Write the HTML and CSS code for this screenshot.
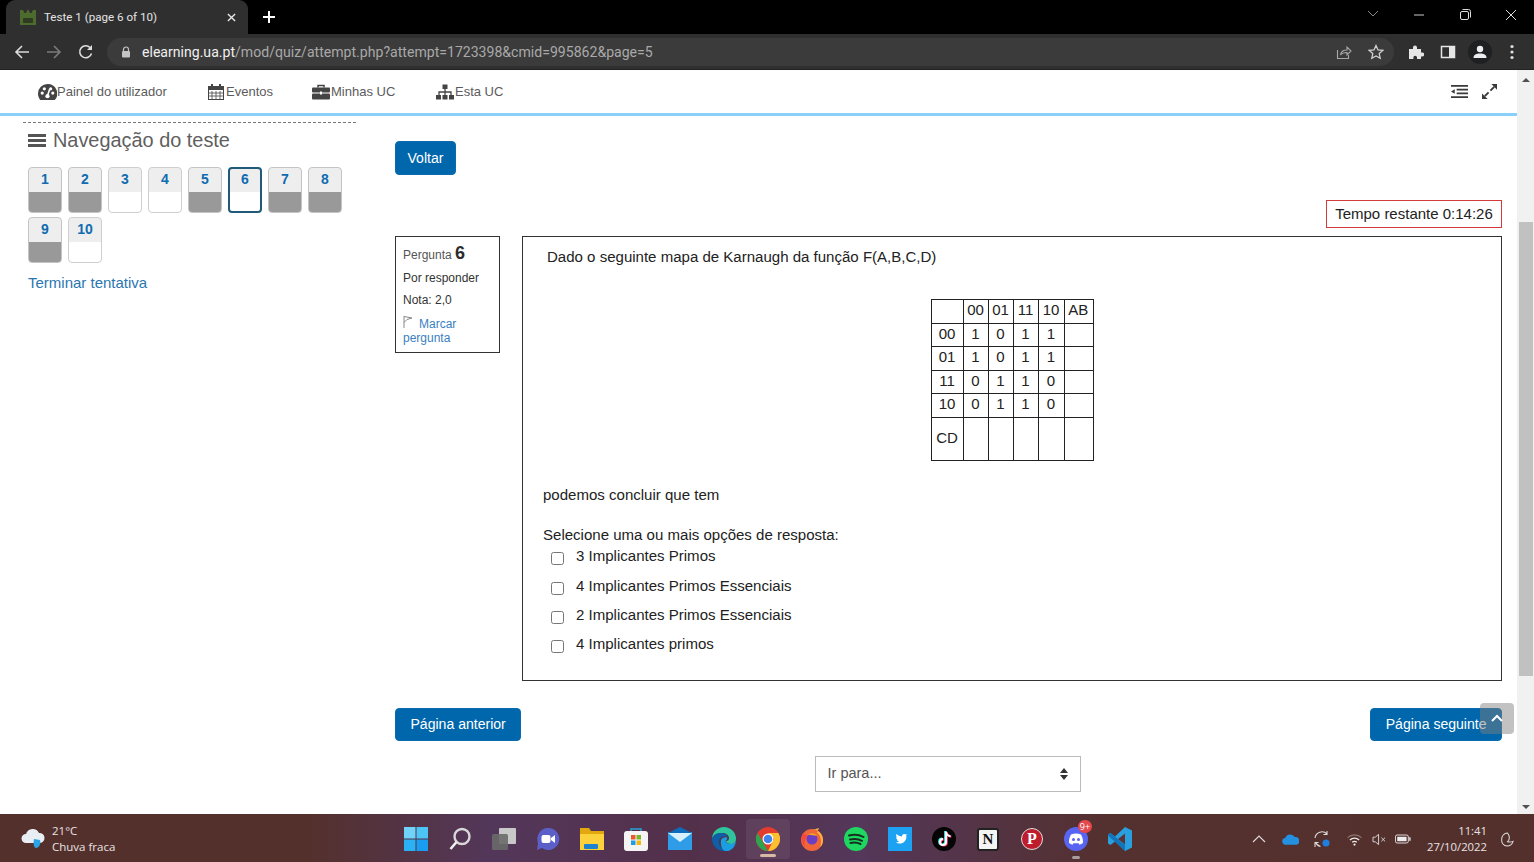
FILE: index.html
```html
<!DOCTYPE html>
<html lang="pt">
<head>
<meta charset="utf-8">
<title>Teste 1 (page 6 of 10)</title>
<link rel="stylesheet" href="styles.css">
</head>
<body>
<div class="tabstrip">
  <div class="tab">
    <svg class="favicon" viewBox="0 0 16 16"><path d="M0 1h3l1.500 3h1.500l2-4 2 4h1.500l1.500-3h3v15H0z" fill="#4d6b2c"/><rect x="3" y="9" width="10" height="5" rx="1" fill="#2f3a22"/></svg>
    <span class="tab-title">Teste 1 (page 6 of 10)</span>
    <svg class="tab-close" viewBox="0 0 10 10"><path d="M1 1l8 8M9 1l-8 8" stroke="#e8e8e8" stroke-width="1.500"/></svg>
  </div>
  <svg class="newtab" viewBox="0 0 12 12"><path d="M6 0v12M0 6h12" stroke="#fff" stroke-width="2"/></svg>
  <div class="winctl">
    <svg class="ctl" viewBox="0 0 46 20"><path d="M18 6l5 5 5-5" fill="none" stroke="#8a8a8a"/></svg>
    <svg class="ctl" viewBox="0 0 46 20"><path d="M18 10h10" stroke="#ccc"/></svg>
    <svg class="ctl" viewBox="0 0 46 20"><rect x="18.500" y="6.500" width="8" height="8" rx="1.500" fill="none" stroke="#ddd"/><path d="M20.500 4.500h6a2 2 0 0 1 2 2v6" fill="none" stroke="#ddd"/></svg>
    <svg class="ctl" viewBox="0 0 46 20"><path d="M18 5l10 10M28 5l-10 10" stroke="#ddd"/></svg>
  </div>
</div>

<div class="toolbar">
  <svg class="tb-ic" viewBox="0 0 16 16"><path d="M15 8H2M8 2L2 8l6 6" fill="none" stroke="#dcdcdc" stroke-width="1.600"/></svg>
  <svg class="tb-ic" viewBox="0 0 16 16"><path d="M1 8h13M8 2l6 6-6 6" fill="none" stroke="#7b7b7b" stroke-width="1.600"/></svg>
  <svg class="tb-ic" viewBox="0 0 16 16"><path d="M13.500 9.500A6 6 0 1 1 12 3.500" fill="none" stroke="#dcdcdc" stroke-width="1.600"/><path d="M14 1v5H9z" fill="#dcdcdc"/></svg>
  <div class="omnibox">
    <svg class="lock" viewBox="0 0 10 12"><path d="M2.500 5V3.500a2.500 2.500 0 0 1 5 0V5" fill="none" stroke="#c4c4c4" stroke-width="1.200"/><rect x="1" y="5" width="8" height="6.500" rx="1" fill="#c4c4c4"/></svg>
    <span class="url"><span class="host">elearning.ua.pt</span>/mod/quiz/attempt.php?attempt=1723398&amp;cmid=995862&amp;page=5</span>
    <svg class="omni-ic" viewBox="0 0 16 16"><path d="M1.500 6v8.500h11V11" fill="none" stroke="#a8a8a8" stroke-width="1.100"/><path d="M4.500 11c.5-3.500 3-5 6.500-5V3l4 4-4 4V8.500c-3 0-5 .5-6.500 2.500z" fill="none" stroke="#a8a8a8" stroke-width="1.100"/></svg>
    <svg class="omni-ic omni-last" viewBox="0 0 16 16"><path d="M8 1.500l2 4.400 4.800.5-3.600 3.200 1 4.700L8 11.900l-4.200 2.400 1-4.700L1.200 6.400 6 5.900z" fill="none" stroke="#d0d0d0" stroke-width="1.300"/></svg>
  </div>
  <svg class="tb-ic" viewBox="0 0 16 16"><path d="M1 5h4V3.500a2 2 0 0 1 4 0V5h4v3.500h1.200a2 2 0 0 1 0 4H13V15H9v-1.500a1.800 1.800 0 0 0-3.600 0V15H1z" fill="#e6e6e6"/></svg>
  <svg class="tb-ic" viewBox="0 0 16 16"><rect x="1.500" y="2.500" width="13" height="11" fill="none" stroke="#e6e6e6" stroke-width="1.500"/><rect x="9" y="2.500" width="5.500" height="11" fill="#e6e6e6"/></svg>
  <div class="avatar"><svg viewBox="0 0 16 16"><circle cx="8" cy="5" r="3.200" fill="#eee"/><path d="M1.500 14c0-3.500 3-4.500 6.500-4.500s6.500 1 6.500 4.500z" fill="#eee"/></svg></div>
  <svg class="tb-ic" viewBox="0 0 16 16"><circle cx="8" cy="2.500" r="1.600" fill="#e0e0e0"/><circle cx="8" cy="8" r="1.600" fill="#e0e0e0"/><circle cx="8" cy="13.500" r="1.600" fill="#e0e0e0"/></svg>
</div>

<div class="viewport">
  <div class="page">
    <nav class="sitenav">
      <a class="navlink nav-a"><svg class="nav-ic" viewBox="0 0 18 15"><path d="M9 0a9 9 0 0 0-9 9c0 2.300.8 4.300 2.100 6h13.800A9 9 0 0 0 9 0z" fill="#444"/><circle cx="4" cy="8.500" r="1.500" fill="#fff"/><circle cx="6" cy="4.500" r="1.500" fill="#fff"/><circle cx="14" cy="8.500" r="1.500" fill="#fff"/><circle cx="12" cy="4.500" r="1.500" fill="#fff"/><circle cx="9" cy="11.500" r="2" fill="#fff"/><path d="M9 11l2-6" stroke="#fff" stroke-width="1.500"/></svg>Painel do utilizador</a>
      <a class="navlink nav-b"><svg class="nav-ic-sq" viewBox="0 0 16 16"><rect x=".5" y="2.500" width="15" height="13" fill="#fff" stroke="#444"/><path d="M0 3h16v3H0z" fill="#444"/><path d="M4 7v8M8 7v8M12 7v8M1 9h14M1 12h14" stroke="#444" stroke-width=".8"/><rect x="3" y="0" width="2" height="4" fill="#444"/><rect x="11" y="0" width="2" height="4" fill="#444"/></svg>Eventos</a>
      <a class="navlink nav-c"><svg class="nav-ic-sq" viewBox="0 0 18 15"><path d="M6 3V1h6v2" fill="none" stroke="#444" stroke-width="1.500"/><rect x="0" y="3" width="18" height="5" rx="1" fill="#444"/><rect x="0" y="9" width="18" height="6" rx="1" fill="#444"/><rect x="8" y="7" width="2" height="3" fill="#fff"/></svg>Minhas UC</a>
      <a class="navlink nav-d"><svg class="nav-ic-sq" viewBox="0 0 18 15"><rect x="6.500" y="0" width="5" height="4.500" fill="#444"/><path d="M9 4v4M3 11V7.500h12V11M9 8v3" fill="none" stroke="#444" stroke-width="1.300"/><rect x="0" y="10.500" width="5" height="4.500" fill="#444"/><rect x="6.500" y="10.500" width="5" height="4.500" fill="#444"/><rect x="13" y="10.500" width="5" height="4.500" fill="#444"/></svg>Esta UC</a>
      <div class="nav-tools">
        <svg class="tool-ic" viewBox="0 0 18 14"><path d="M0 1h18M6 5h12M6 9h12M0 13h18" stroke="#3a3a3a" stroke-width="2"/><path d="M4 4.500v5L0 7z" fill="#3a3a3a"/></svg>
        <svg class="tool-ic" viewBox="0 0 16 16"><path d="M9 7l4-4M3 13l4-4" stroke="#3a3a3a" stroke-width="2"/><path d="M10 0h6v6zM0 10l6 6H0z" fill="#3a3a3a"/></svg>
      </div>
    </nav>

    <div class="content">
      <aside class="side">
        <h2 class="side-title"><svg class="burger" viewBox="0 0 18 14"><path d="M0 2h18M0 7h18M0 12h18" stroke="#555" stroke-width="3"/></svg>Navegação do teste</h2>
        <div class="qgrid">
          <a class="qb filled"><span>1</span></a>
          <a class="qb filled"><span>2</span></a>
          <a class="qb"><span>3</span></a>
          <a class="qb"><span>4</span></a>
          <a class="qb filled"><span>5</span></a>
          <a class="qb current"><span>6</span></a>
          <a class="qb filled"><span>7</span></a>
          <a class="qb filled"><span>8</span></a>
          <a class="qb filled"><span>9</span></a>
          <a class="qb"><span>10</span></a>
        </div>
        <a class="finish">Terminar tentativa</a>
      </aside>

      <main class="quiz">
        <a class="btn btn-back">Voltar</a>
        <div class="timer">Tempo restante 0:14:26</div>
        <div class="question">
          <div class="info">
            <div class="qno">Pergunta <b>6</b></div>
            <div class="state">Por responder</div>
            <div class="grade">Nota: 2,0</div>
            <a class="flag"><svg class="flag-ic" viewBox="0 0 10 12"><path d="M1 0v12M1 .5l8 1.500-5 1.500-3 3" fill="none" stroke="#888"/></svg>Marcar pergunta</a>
          </div>
          <div class="qtext">
            <p class="lead">Dado o seguinte mapa de Karnaugh da função F(A,B,C,D)</p>
            <table class="kmap">
              <tr><td></td><td>00</td><td>01</td><td>11</td><td>10</td><td>AB</td></tr>
              <tr><td>00</td><td>1</td><td>0</td><td>1</td><td>1</td><td></td></tr>
              <tr><td>01</td><td>1</td><td>0</td><td>1</td><td>1</td><td></td></tr>
              <tr><td>11</td><td>0</td><td>1</td><td>1</td><td>0</td><td></td></tr>
              <tr><td>10</td><td>0</td><td>1</td><td>1</td><td>0</td><td></td></tr>
              <tr class="last"><td>CD</td><td></td><td></td><td></td><td></td><td></td></tr>
            </table>
            <p class="conclude">podemos concluir que tem</p>
            <p class="prompt">Selecione uma ou mais opções de resposta:</p>
            <label class="opt"><input type="checkbox" class="cb"><span>3 Implicantes Primos</span></label>
            <label class="opt"><input type="checkbox" class="cb"><span>4 Implicantes Primos Essenciais</span></label>
            <label class="opt"><input type="checkbox" class="cb"><span>2 Implicantes Primos Essenciais</span></label>
            <label class="opt"><input type="checkbox" class="cb"><span>4 Implicantes primos</span></label>
          </div>
        </div>
        <div class="pager">
          <a class="btn btn-page">Página anterior</a>
          <a class="btn btn-page">Página seguinte</a>
        </div>
        <div class="jump"><div class="select"><span>Ir para...</span><svg class="updown" viewBox="0 0 8 12"><path d="M4 0l4 5H0zM4 12L0 7h8z" fill="#333"/></svg></div></div>
      </main>
    </div>
    <div class="totop"><svg viewBox="0 0 12 8"><path d="M1 7l5-5 5 5" fill="none" stroke="#fff" stroke-width="2"/></svg></div>
  </div>
  <div class="scrollbar">
    <div class="arrow-up"></div>
    <div class="thumb"></div>
    <div class="arrow-down"></div>
  </div>
</div>

<footer class="taskbar">
  <div class="weather">
    <svg class="w-ic" viewBox="0 0 26 24"><path d="M6 16a4.500 4.500 0 0 1 0-9 7 7 0 0 1 13-1 5 5 0 0 1 1 10z" fill="#e8eef4"/><path d="M14 12l6 1c1 4-1 8-4 8-2 0-3-4-2-9z" fill="#2aa4e8"/></svg>
    <div class="w-txt"><div class="w-temp">21°C</div><div class="w-desc">Chuva fraca</div></div>
  </div>
  <div class="apps">
    <div class="app"><svg viewBox="0 0 24 24"><rect width="11.500" height="11.500" fill="#6fd4f8"/><rect x="12.500" width="11.500" height="11.500" fill="#4cc4f6"/><rect y="12.500" width="11.500" height="11.500" fill="#2ab0f4"/><rect x="12.500" y="12.500" width="11.500" height="11.500" fill="#1a9cf0"/></svg></div>
    <div class="app"><svg viewBox="0 0 24 24"><circle cx="14" cy="9.500" r="7.500" fill="none" stroke="#d8d8d8" stroke-width="2.400"/><path d="M8.500 15L2.500 22" stroke="#f0f0f0" stroke-width="2.600"/></svg></div>
    <div class="app"><svg viewBox="0 0 24 24"><rect x="7" y="1" width="17" height="16" rx="1" fill="#c8c8c8"/><rect x="0" y="7" width="16" height="16" rx="1.500" fill="#6a6a6a" opacity=".9"/></svg></div>
    <div class="app"><svg viewBox="0 0 24 24"><path d="M12 1a11 11 0 1 1-6 20l-5 2 1-7A11 11 0 0 1 12 1z" fill="#5b5fc7"/><rect x="5.500" y="8" width="9" height="8" rx="2" fill="#fff"/><path d="M15 11l4-3v8l-4-3z" fill="#fff"/></svg></div>
    <div class="app"><svg viewBox="0 0 24 24"><path d="M0 1h9l2 3h13v18H0z" fill="#e3a80f"/><path d="M0 7h24v16H0z" fill="#fbd23c"/><rect x="4" y="17" width="14" height="5" rx="1" fill="#1c82d0"/></svg></div>
    <div class="app"><svg viewBox="0 0 24 24"><path d="M7 5V2h10v3" fill="none" stroke="#2a9fd8" stroke-width="1.500"/><rect x="0" y="4" width="24" height="20" rx="3" fill="#f4f4f4"/><rect x="7" y="8" width="4.500" height="4.500" fill="#e85a2a"/><rect x="12.500" y="8" width="4.500" height="4.500" fill="#7ab52a"/><rect x="7" y="13.500" width="4.500" height="4.500" fill="#1e9ce8"/><rect x="12.500" y="13.500" width="4.500" height="4.500" fill="#f5b70f"/></svg></div>
    <div class="app"><svg viewBox="0 0 24 24"><rect y="5" width="24" height="18" fill="#2f9ce8"/><path d="M0 6l12-6 12 6-12 8z" fill="#0f6cbd"/><path d="M0 6h24L12 15z" fill="#d8f0fc"/></svg></div>
    <div class="app"><svg viewBox="0 0 24 24"><path d="M12 0a12 12 0 0 1 12 12c0 3-2 5-5 5-2.500 0-5-1-5-3 2 0 3-1 3-3 0-3-3-5-7-5C5 6 1 8 0 12A12 12 0 0 1 12 0z" fill="#2fc49c"/><path d="M0 12c1-4 5-6 9-6 3 0 6 1.500 7 4-4-2-9 0-9 5 0 4 3 8 8 8.600A12 12 0 0 1 0 12z" fill="#0d5fa8"/><path d="M9 13c1-2 3-3 6-2.500.6 1-.4 2.800-1.500 3.500.3 2 2.500 3 5.500 3 2 0 4-1 5-3a12 12 0 0 1-9 10.500c-4-.5-7-4-6-11.500z" fill="#1b9de2"/></svg></div>
    <div class="app app-active"><svg viewBox="0 0 24 24"><circle cx="12" cy="12" r="12" fill="#e33b2e"/><path d="M1.600 6L12 24a12 12 0 0 1-10.400-18z" fill="#2ea44f"/><path d="M12 6h10.400A12 12 0 0 1 12 24l6-12z" fill="#fbc02d"/><circle cx="12" cy="12" r="5.500" fill="#fff"/><circle cx="12" cy="12" r="4.300" fill="#3f84e8"/></svg></div>
    <div class="app"><svg viewBox="0 0 24 24"><circle cx="12" cy="13" r="11" fill="#f0663a"/><path d="M12 2c6 0 11 5 11 11 0 3-1 6-3 7 2-5 1-12-3-14l2-5c-2 1-5 1-7 1z" fill="#fbb13c"/><path d="M3 6C1 9 1 16 5 20c-1-4 0-9 3-11z" fill="#f5493e"/><circle cx="12" cy="12" r="5.500" fill="#6a3fc4"/><path d="M8 8c3-3 8-2 9 1-3-1-6-1-9-1z" fill="#f9a11b"/></svg></div>
    <div class="app"><svg viewBox="0 0 24 24"><circle cx="12" cy="12" r="12" fill="#1ed760"/><path d="M5 8.500c5-1.500 10-1 14.500 1.500M6 12.500c4-1 8.500-.7 12 1.300M6.500 16c3.500-.8 7-.5 10 1" fill="none" stroke="#15301f" stroke-width="2" stroke-linecap="round"/></svg></div>
    <div class="app"><svg viewBox="0 0 24 24"><rect width="24" height="24" fill="#1da1f2"/><path d="M18 8.500c.6-.3 1-.8 1.300-1.300l-1.500.4c-1-1.200-3.800-.9-3.800 1.800-2.200 0-4-1-5.500-2.500-.8 1.500-.2 2.800.8 3.600l-1.200-.3c0 1.300.9 2.200 2 2.600h-1.200c.4 1 1.300 1.600 2.300 1.700-1 .8-2.300 1.100-3.600 1 5.500 3 11-.6 10.800-6.300z" fill="#fff"/></svg></div>
    <div class="app"><svg viewBox="0 0 24 24"><circle cx="12" cy="12" r="12" fill="#050505"/><path d="M14 4.500v10.500a3 3 0 1 1-3-3M14 5c.3 2.500 2 4 4.500 4.200" fill="none" stroke="#25f4ee" stroke-width="2.200" transform="translate(-.8 -.4)"/><path d="M14 4.500v10.500a3 3 0 1 1-3-3M14 5c.3 2.500 2 4 4.500 4.200" fill="none" stroke="#fe2c55" stroke-width="2.200" transform="translate(.8 .4)"/><path d="M14 4.500v10.500a3 3 0 1 1-3-3M14 5c.3 2.500 2 4 4.500 4.200" fill="none" stroke="#fff" stroke-width="2"/></svg></div>
    <div class="app"><div class="notion">N</div></div>
    <div class="app"><div class="pin">P</div></div>
    <div class="app app-discord"><svg viewBox="0 0 24 24"><circle cx="12" cy="12" r="12" fill="#5865f2"/><path d="M7 7.500c3-1.300 7-1.300 10 0 1.500 2.500 2.200 5.500 2 8.500-1.200.9-2.400 1.400-3.500 1.700l-.9-1.500H9.400l-.9 1.500C7.400 17.400 6.200 16.900 5 16c-.2-3 .5-6 2-8.500z" fill="#fff"/><circle cx="9.500" cy="12.500" r="1.500" fill="#5865f2"/><circle cx="14.500" cy="12.500" r="1.500" fill="#5865f2"/></svg><span class="badge">9+</span></div>
    <div class="app"><svg viewBox="0 0 24 24"><path d="M17 0l7 3.500v17L17 24 7 14.500 2.500 18 0 16.500V7.500L2.500 6 7 9.500z" fill="#2a9fe0"/><path d="M17 6.500L10 12l7 5.500z" fill="#5b3135"/><path d="M0 7.500L2.500 6 17 18v6L0 8.500z" fill="#0f6fb5" opacity=".9"/></svg></div>
  </div>
  <div class="tray">
    <svg class="tr-ic" viewBox="0 0 14 14"><path d="M1 10l6-6 6 6" fill="none" stroke="#ddd" stroke-width="1.100"/></svg>
    <svg class="tr-od" viewBox="0 0 18 12"><path d="M4 12a3.500 3.500 0 0 1-.5-7A5.500 5.500 0 0 1 13.500 4 4 4 0 0 1 15 12z" fill="#2490e0"/></svg>
    <svg class="tr-sync" viewBox="0 0 18 18"><path d="M2 8a7 7 0 0 1 12-4M14 1v3.500h-3.500M2.500 12a7 7 0 0 0 5 4.500M2 17v-4.500h3.500" fill="none" stroke="#ddd" stroke-width="1.100"/><circle cx="13" cy="13" r="3.500" fill="#1f7fe0"/></svg>
    <svg class="tr-wifi" viewBox="0 0 16 14"><path d="M.5 5a11 11 0 0 1 15 0" fill="none" stroke="#8d7672" stroke-width="1.200"/><path d="M3 7.500a7.500 7.500 0 0 1 10 0M5.500 10a4 4 0 0 1 5 0" fill="none" stroke="#eee" stroke-width="1.300"/><circle cx="8" cy="12.500" r="1.200" fill="#eee"/></svg>
    <svg class="tr-vol" viewBox="0 0 16 14"><path d="M1 4.500h2.500L7 1.500v11l-3.500-3H1z" fill="none" stroke="#ddd"/><path d="M10 5l4 4M14 5l-4 4" stroke="#ddd"/></svg>
    <svg class="tr-bat" viewBox="0 0 18 12"><rect x=".5" y="1.500" width="14.500" height="9" rx="2" fill="none" stroke="#eee"/><rect x="2.500" y="3.500" width="10.500" height="5" fill="#eee"/><rect x="16" y="4" width="1.500" height="4" fill="#eee"/></svg>
    <div class="clock"><div>11:41</div><div>27/10/2022</div></div>
    <svg class="tr-moon" viewBox="0 0 14 16"><path d="M7 1c2.500 3 3 6 0 9.500 2 .5 4 .3 6-.5-1 3-3.500 5-6.500 5A6 6 0 0 1 .8 8 6.500 6.500 0 0 1 7 1z" fill="none" stroke="#ddd" stroke-width="1.100"/></svg>
  </div>
</footer>
</body>
</html>
```

FILE: styles.css
```css
* { box-sizing: border-box; }
html, body { margin: 0; padding: 0; height: 100%; overflow: hidden; }
body { width: 1534px; height: 862px; display: flex; flex-direction: column; font-family: "Liberation Sans", Arial, sans-serif; background: #fff; }
p { margin: 0; }

/* browser chrome */
.tabstrip { height: 34px; flex: none; background: #000; display: flex; align-items: flex-end; padding-left: 6px; }
.tab { width: 242px; height: 34px; background: #2f2f2f; border-radius: 9px 9px 0 0; display: flex; align-items: center; padding: 0 0 0 14px; }
.favicon { width: 16px; height: 16px; flex: none; }
.tab-title { margin-left: 8px; font: 11.600px Roboto, sans-serif; color: #e4e4e4; white-space: nowrap; }
.tab-close { width: 9px; height: 9px; margin-left: auto; margin-right: 12px; flex: none; }
.newtab { width: 12px; height: 12px; margin: 0 0 11px 15px; flex: none; }
.winctl { margin-left: auto; display: flex; align-self: flex-start; margin-top: 5px; }
.ctl { width: 46px; height: 20px; display: block; }
.toolbar { height: 36px; flex: none; background: #2f2f2f; display: flex; align-items: center; padding: 1px 14px 0 14px; border-bottom: 1px solid #222; }
.tb-ic { width: 16px; height: 16px; flex: none; margin-right: 16px; }
.omnibox { width: 1287px; height: 28px; margin: 0 14px 0 -3px; flex: none; border-radius: 14px; background: #3b3b3b; display: flex; align-items: center; padding-left: 14px; }
.lock { width: 10px; height: 12px; flex: none; }
.url { margin-left: 11px; font: 14.090px Roboto, sans-serif; color: #a9a9a9; white-space: nowrap; }
.host { color: #f0f0f0; }
.omni-ic { width: 16px; height: 16px; flex: none; margin-right: 16px; }
.omni-ic.omni-last { margin-right: 10px; }
.url + .omni-ic { margin-left: auto; }
.avatar { width: 24px; height: 24px; border-radius: 50%; background: #1f2022; display: flex; align-items: center; justify-content: center; margin: 0 12px 0 -4px; flex: none; }
.avatar svg { width: 16px; height: 16px; }

/* page */
.viewport { height: 744px; flex: none; display: flex; }
.page { width: 1517px; flex: none; position: relative; background: #fff; }
.sitenav { height: 46px; border-bottom: 3px solid #8bd0f9; display: flex; align-items: center; padding-left: 38px; position: relative; }
.navlink { display: flex; align-items: center; font-size: 13px; color: #5b5b5b; white-space: nowrap; }
.nav-a { width: 169px; }
.nav-b { width: 105px; }
.nav-c { width: 124px; }
.nav-ic { width: 19px; height: 16px; flex: none; }
.nav-ic-sq { width: 18px; height: 16px; flex: none; margin-right: 1px; }
.nav-tools { margin-left: auto; margin-right: 19px; display: flex; gap: 13px; align-items: center; }
.tool-ic { width: 17px; height: 15px; display: block; }

.content { display: flex; padding-left: 23px; }
.side { width: 333px; flex: none; margin-top: 6px; border-top: 1px dashed #777; padding: 0 0 0 5px; }
.side-title { margin: 6px 0 0 -5px; height: 23px; display: flex; align-items: center; font-size: 19.900px; font-weight: 400; color: #5f5f5f; white-space: nowrap; }
.burger { width: 18px; height: 15px; margin: 0 7px 0 5px; flex: none; }
.qgrid { margin-top: 15px; display: flex; flex-wrap: wrap; width: 320px; gap: 4px 6px; }
.qb { width: 34px; height: 46px; border: 1px solid #cfcfcf; border-radius: 4px; background: linear-gradient(#eeeeee 0 24px, #fff 24px); text-align: center; font-size: 14px; font-weight: 700; color: #0f6cb0; line-height: 23px; overflow: hidden; }
.qb.filled { border-color: #c4c4c4; background: linear-gradient(#eeeeee 0 24px, #999 24px); }
.qb.current { border: 2px solid #1f5a78; line-height: 21px; background: linear-gradient(#eeeeee 0 23px, #fff 23px); }
.finish { display: block; margin-top: 11px; font-size: 15px; color: #2a76b0; }
.quiz { width: 1107px; flex: none; margin-left: 39px; padding-top: 25px; }
.btn { display: inline-flex; align-items: center; justify-content: center; background: #0067ac; border: 1px solid #0a6cae; border-radius: 4px; color: #fff; font-size: 14.060px; }
.btn-back { width: 61px; height: 34px; vertical-align: top; }
.timer { width: 176px; height: 28px; margin: 25px 0 8px auto; border: 1px solid #d43a3a; padding-bottom: 1px; display: flex; align-items: center; justify-content: center; font-size: 15px; color: #222; white-space: nowrap; }
.question { display: flex; gap: 22px; align-items: flex-start; }
.info { width: 105px; height: 117px; border: 1px solid #333; padding: 6px 7px 0 7px; font-size: 12px; color: #333; }
.qno { height: 22px; color: #555; }
.qno b { font-size: 18px; color: #2c2c2c; }
.state { margin-top: 6px; }
.grade { margin-top: 7.500px; }
.flag { display: block; margin-top: 9.500px; color: #3a80c0; line-height: 14px; }
.flag-ic { width: 10px; height: 12px; margin-right: 6px; }
.qtext { width: 980px; height: 445px; border: 1px solid #333; padding: 11px 20px 0 20px; font-size: 15.040px; color: #222; }
.lead { margin-left: 4px; line-height: 18px; }
.kmap { border-collapse: collapse; margin: 33px 0 0 388px; font-size: 15.040px; table-layout: fixed; }
.kmap td { border: 1px solid #222; padding: 0 1px 3px 0; height: 23.500px; text-align: center; }
.kmap td:nth-child(1) { width: 32px; }
.kmap td:nth-child(2), .kmap td:nth-child(3), .kmap td:nth-child(4) { width: 25px; }
.kmap td:nth-child(5) { width: 26px; }
.kmap td:nth-child(6) { width: 28.500px; }
.kmap .last td { height: 43.500px; }
.conclude { margin-top: 25px; line-height: 18px; }
.prompt { margin-top: 22px; line-height: 18px; }
.opt { display: flex; align-items: flex-start; padding-left: 8px; height: 29.200px; line-height: 18px; }
.opt:first-of-type { margin-top: 3.400px; }
.cb { width: 13px; height: 13px; margin: 5px 12px 0 0; flex: none; }
.pager { display: flex; justify-content: space-between; margin-top: 27px; }
.btn-page { height: 33px; padding: 0 14.500px 1px; }
.jump { margin-top: 15px; padding-right: 2px; display: flex; justify-content: center; }
.select { width: 266px; height: 36px; border: 1px solid #bbb; padding: 0 12px 2px; display: flex; align-items: center; justify-content: space-between; font-size: 14.500px; color: #555; }
.updown { width: 8px; height: 12px; margin-top: 2px; }
.totop { position: absolute; left: 1480px; top: 633px; width: 34px; height: 31px; border-radius: 4px; background: rgba(128,128,128,.48); display: flex; justify-content: center; padding-top: 11px; }
.totop svg { width: 12px; height: 8px; }

.scrollbar { width: 17px; flex: none; background: #f1f1f1; display: flex; flex-direction: column; align-items: center; padding-top: 8px; }
.arrow-up { width: 0; height: 0; border: 4px solid transparent; border-top: 0; border-bottom: 4px solid #505050; }
.thumb { width: 14px; height: 454px; margin-top: 140px; margin-left: 1px; background: #c1c1c1; }
.arrow-down { width: 0; height: 0; margin-top: 129px; border: 4px solid transparent; border-bottom: 0; border-top: 4px solid #505050; }

/* taskbar */
.taskbar { height: 48px; flex: none; padding-top: 2px; display: flex; align-items: center; color: #e8e3e2; font-family: "Open Sans", sans-serif; background: linear-gradient(90deg, #54302c 0 20%, #53375a 32%, #53304a 45%, #54375a 56%, #54302f 72%, #54302c); }
.weather { width: 394px; flex: none; display: flex; align-items: center; padding-left: 20px; }
.w-ic { width: 26px; height: 24px; flex: none; }
.w-txt { margin-left: 6px; font-size: 11.500px; line-height: 16px; }
.apps { display: flex; flex: none; }
.app { width: 44px; height: 40px; display: flex; align-items: center; justify-content: center; position: relative; }
.app svg { width: 24px; height: 24px; }
.app-active { background: rgba(255,255,255,.07); border-radius: 4px; }
.app-active::after { content: ""; position: absolute; left: 14px; bottom: 2px; width: 16px; height: 3px; border-radius: 2px; background: #d8b9a3; }
.app-discord::after { content: ""; position: absolute; left: 18px; bottom: 0; width: 8px; height: 3px; border-radius: 2px; background: #a89c9c; }
.notion { width: 22px; height: 23px; background: #f4f4f4; border: 2px solid #222; border-radius: 3px; color: #111; font: 700 15px/19px "Liberation Serif", serif; text-align: center; }
.pin { width: 22px; height: 22px; border-radius: 50%; background: #bd1c2c; border: 1px solid #ddd; color: #fff; font: 700 16px/20px "Liberation Serif", serif; text-align: center; }
.badge { position: absolute; left: 24px; top: 1px; width: 14px; height: 13px; border-radius: 7px; background: #e5484d; color: #fff; font: 9px/13px "Open Sans", sans-serif; text-align: center; }
.tray { flex: 1; display: flex; align-items: center; padding-left: 110px; }
.tr-ic { width: 14px; height: 14px; flex: none; }
.tr-od { width: 17px; height: 12px; margin-left: 16px; flex: none; }
.tr-sync { width: 18px; height: 18px; margin-left: 14px; flex: none; }
.tr-wifi { width: 15px; height: 13px; margin-left: 16px; flex: none; }
.tr-vol { width: 15px; height: 13px; margin-left: 10px; flex: none; }
.tr-bat { width: 16px; height: 12px; margin-left: 8px; flex: none; }
.clock { width: 66px; margin-left: 10px; font-size: 11.300px; line-height: 16px; text-align: right; flex: none; }
.tr-moon { width: 13px; height: 15px; margin-left: 14px; flex: none; }
```
